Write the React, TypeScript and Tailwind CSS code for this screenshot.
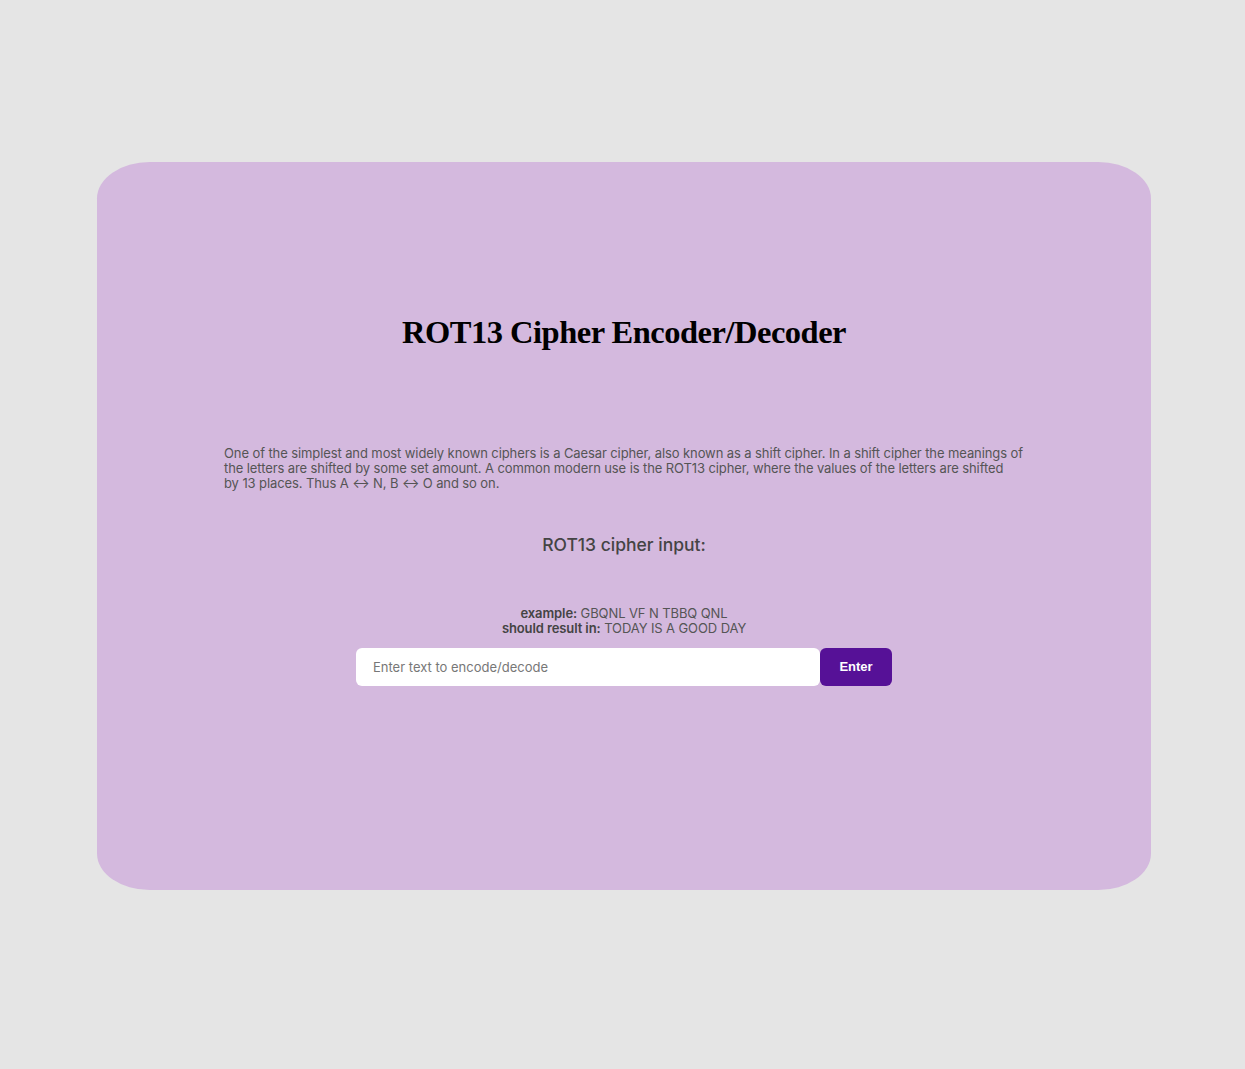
export default function App() {
  return (
    <div className="min-h-[1069px] w-full bg-[#e5e5e5] pt-[162px]" style={{ fontFamily: "Inter, 'Noto Sans', sans-serif" }}>
      <div className="ml-[97px] h-[728px] w-[1054px] rounded-[5%] bg-[#d4b9de] flex flex-col items-center">
        <h1 className="mt-[148px] text-[32.5px] leading-[44px] font-bold text-black tracking-[-0.5px]" style={{ fontFamily: "'Liberation Serif', 'DejaVu Serif', serif" }}>
          ROT13 Cipher Encoder/Decoder
        </h1>
        <p className="mt-[92px] w-[800px] text-[13px] leading-[15px] text-[#555] tracking-[-0.1px]">
          One of the simplest and most widely known ciphers is a Caesar cipher, also known as a shift cipher. In a shift cipher the meanings of the letters are shifted by some set amount. A common modern use is the ROT13 cipher, where the values of the letters are shifted by{"\u00a0"}13 places. Thus A ↔ N, B ↔ O and so on.
        </p>
        <h2 className="mt-[43px] text-[17.5px] leading-[22px] font-medium text-[#444]">ROT13 cipher input:</h2>
        <div className="mt-[50px] text-[13px] leading-[15px] text-[#555] text-center tracking-[-0.1px]">
          <div><span className="font-semibold text-[#444]">example:</span> GBQNL VF N TBBQ QNL</div>
          <div><span className="font-semibold text-[#444]">should result in:</span> TODAY IS A GOOD DAY</div>
        </div>
        <div className="mt-[12px] flex">
          <input
            className="h-[38px] w-[464px] rounded-[6px] bg-white px-[17px] text-[13px] text-[#333] placeholder:text-[#777] outline-none"
            placeholder="Enter text to encode/decode"
          />
          <button className="h-[38px] w-[72px] rounded-[6px] bg-[#561197] text-[13px] font-bold text-white" style={{ fontFamily: "'Liberation Sans', Arial, sans-serif" }}>
            Enter
          </button>
        </div>
      </div>
    </div>
  );
}
